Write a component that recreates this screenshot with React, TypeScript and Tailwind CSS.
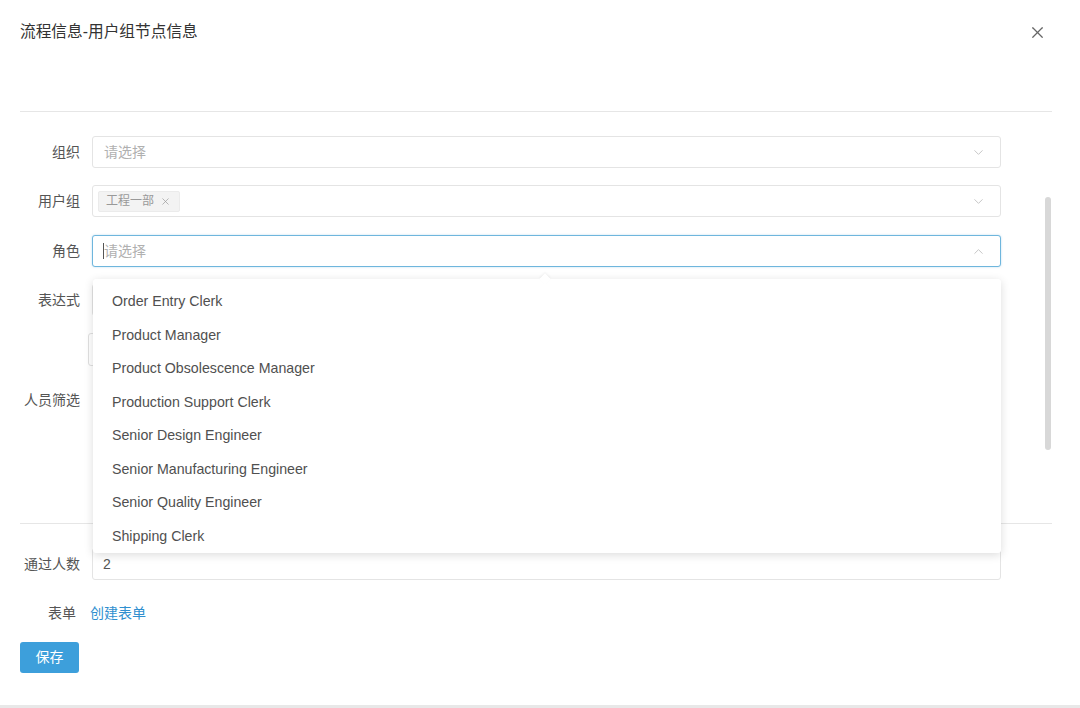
import { ChevronDown, ChevronUp, X } from "lucide-react";

const roles = [
  "Order Entry Clerk",
  "Product Manager",
  "Product Obsolescence Manager",
  "Production Support Clerk",
  "Senior Design Engineer",
  "Senior Manufacturing Engineer",
  "Senior Quality Engineer",
  "Shipping Clerk",
];

function Label({ text, width = "w-[80px]" }: { text: string; width?: string }) {
  return (
    <div className={`${width} shrink-0 text-right text-[14px] leading-[32px] text-[#555]`}>{text}</div>
  );
}

function SelectBox({ children, open = false }: { children?: React.ReactNode; open?: boolean }) {
  return (
    <div
      className={`flex h-[32px] w-[909px] items-center rounded-[3px] border bg-white pl-[11px] pr-[14px] ${
        open ? "border-[#6fb6dd] shadow-[0_0_2px_rgba(111,182,221,0.5)]" : "border-[#e4e4e4]"
      }`}
    >
      <div className="flex flex-1 items-center">{children}</div>
      {open ? (
        <ChevronUp size={15} strokeWidth={1.5} className="text-[#c2c2c2]" />
      ) : (
        <ChevronDown size={15} strokeWidth={1.5} className="text-[#c2c2c2]" />
      )}
    </div>
  );
}

export default function App() {
  return (
    <div
      className="relative box-border h-[708px] w-[1080px] overflow-hidden border-b-[3px] border-[#e8e8e8] bg-white text-[#333]"
      style={{ fontFamily: '"Liberation Sans", "Noto Sans CJK SC", sans-serif' }}
    >
      {/* header */}
      <div className="ml-[20px] mr-[28px] flex h-[112px] items-start justify-between border-b border-[#e6e6e6]">
        <h1 className="pt-[21px] text-[15.7px] leading-[22px] text-[#333]">流程信息-用户组节点信息</h1>
        <X size={19} strokeWidth={1.5} className="mr-[5px] mt-[23px] text-[#666]" />
      </div>

      {/* form */}
      <div className="flex flex-col pt-[24px]">
        <div className="flex items-center gap-[12px]">
          <Label text="组织" />
          <SelectBox>
            <span className="text-[14px] text-[#b0b0b0]">请选择</span>
          </SelectBox>
        </div>

        <div className="mt-[17px] flex items-center gap-[12px]">
          <Label text="用户组" />
          <SelectBox>
            <span className="-ml-[6px] flex h-[21px] items-center gap-[6px] rounded-[2px] border border-[#ebebeb] bg-[#f3f3f3] pl-[7px] pr-[8px] text-[12px] text-[#999]">
              工程一部
              <X size={11} strokeWidth={1.5} className="text-[#999]" />
            </span>
          </SelectBox>
        </div>

        <div className="relative mt-[18px] flex items-center gap-[12px]">
          <Label text="角色" />
          <SelectBox open>
            <span className="-ml-[1px] h-[16px] w-px bg-[#555]" />
            <span className="text-[14px] text-[#b0b0b0]">请选择</span>
          </SelectBox>

          {/* dropdown menu */}
          <div className="absolute left-[93px] top-[44px] z-10 w-[908px] rounded-[3px] bg-white pt-[6px] shadow-[0_2px_10px_rgba(0,0,0,0.14)]">
            <div className="absolute left-[448px] top-[-4px] h-[8px] w-[8px] rotate-45 bg-white shadow-[-1px_-1px_2px_rgba(0,0,0,0.05)]" />
            {roles.map((r) => (
              <div key={r} className="flex h-[33.5px] items-center pl-[19px] text-[14.2px] text-[#505050]">
                {r}
              </div>
            ))}
          </div>
        </div>

        <div className="mt-[17px] flex items-start gap-[12px]">
          <Label text="表达式" />
          <div className="flex flex-col">
            <SelectBox />
            <div className="-ml-[4px] mt-[17px] h-[33px] w-[120px] rounded-[3px] border border-[#e0e0e0]" />
          </div>
        </div>

        <div className="mt-[18px] flex items-start gap-[12px]">
          <Label text="人员筛选" />
          <div className="h-[120px] w-[909px]" />
        </div>

        <div className="ml-[20px] mr-[28px] mt-[19px] border-t border-[#e6e6e6]" />

        <div className="mt-[24px] flex items-center gap-[12px]">
          <Label text="通过人数" />
          <div className="flex h-[32px] w-[909px] items-center rounded-[3px] border border-[#e4e4e4] pl-[10px] text-[14px] text-[#555]">
            2
          </div>
        </div>

        <div className="mt-[17px] flex items-center gap-[14px]">
          <Label text="表单" width="w-[76px]" />
          <a className="text-[14px] leading-[32px] text-[#2f8fcf]">创建表单</a>
        </div>

        <div className="ml-[20px] mt-[13px]">
          <button className="h-[31px] w-[59px] rounded-[3px] bg-[#3d9fdb] text-[14px] text-white">保存</button>
        </div>
      </div>

      {/* scrollbar */}
      <div className="absolute left-[1045px] top-[197px] h-[253px] w-[6px] rounded-full bg-[#d8d8d8]" />
    </div>
  );
}
